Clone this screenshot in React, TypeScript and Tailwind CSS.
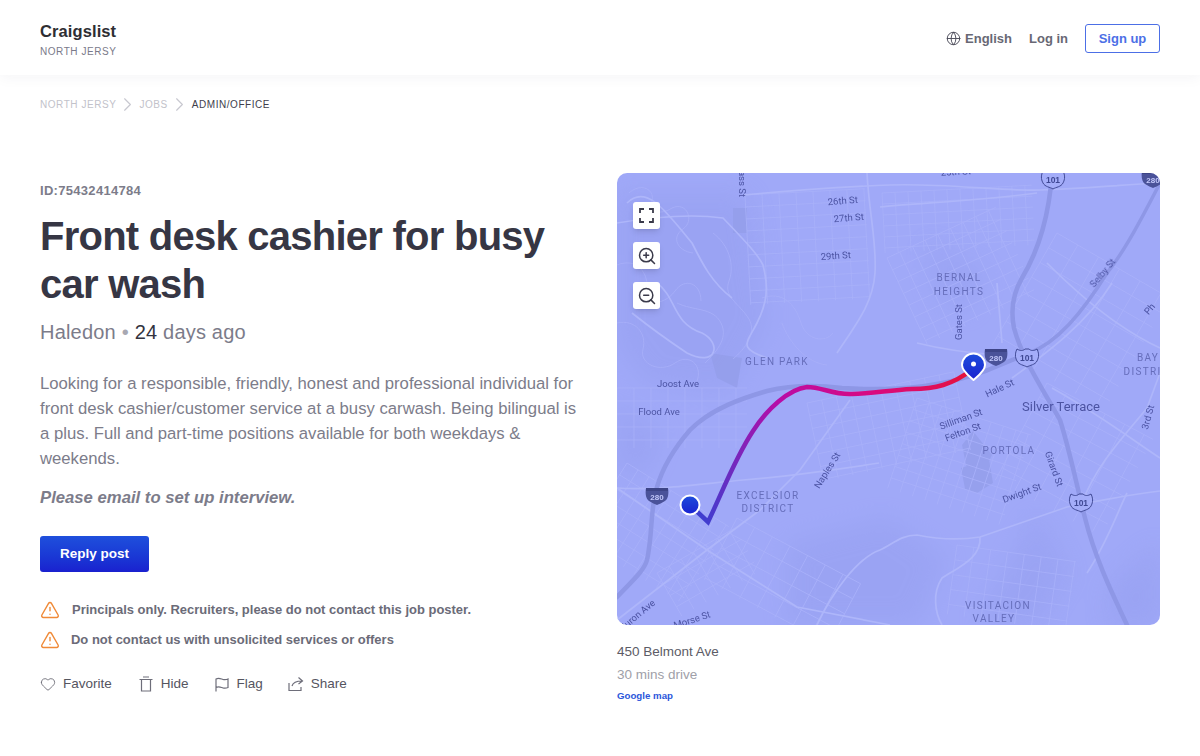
import React from 'react';
import { ChevronRight, Globe, Heart, TriangleAlert, ZoomIn, ZoomOut } from 'lucide-react';

const roads = [
  'M126 22 C170 18 220 14 273 12 S380 18 423 17 S500 12 543 10',
  'M250 0 C252 40 260 70 258 100 S240 150 220 180',
  'M0 50 C30 45 70 40 106 45 C125 65 140 80 146 92 C152 115 150 130 140 150 S120 175 150 185',
  'M263 34 C300 30 360 28 420 20',
  'M0 315 C40 318 90 310 126 307 S210 298 262 290',
  'M0 315 L90 377 L180 434 L273 452',
  'M0 447 L90 377 L143 337 L183 297 L233 227',
  'M200 452 C215 420 240 385 263 377 C275 372 283 362 300 362 C330 368 350 366 363 364 L450 334 C480 328 510 322 543 318',
  'M363 364 C365 385 340 395 325 405 C315 420 318 440 325 452',
  'M395 205 C430 180 470 150 495 110',
  'M430 90 C470 130 510 160 543 175',
  'M435 215 C480 240 520 270 543 285',
  'M465 330 C480 290 510 260 530 235 L543 200',
  'M470 400 C490 370 500 340 510 320',
  'M40 110 C60 125 55 150 85 160 C105 170 100 195 70 180 C55 170 40 160 15 140',
  'M10 30 C30 10 50 40 75 70 C85 90 95 110 115 125',
  'M300 170 C320 175 350 180 382 182',
  'M380 110 L385 170',
];

// thin winding streets on the hills
const hillRoads = [
  'M12 20 C25 8 40 18 34 30 C28 40 45 42 55 35 C70 28 78 48 66 56 C54 64 60 78 76 80',
  'M0 92 C20 84 32 100 30 118 C28 136 50 130 58 118 C68 104 84 110 84 128',
  'M0 150 C18 146 30 160 26 176 C22 192 44 200 58 190 C72 180 86 192 80 208',
  'M96 60 C112 72 118 92 112 108 C106 124 122 130 132 146 C140 160 128 176 116 186',
  'M60 130 C76 138 96 134 104 150 C112 166 98 180 88 190',
  'M145 125 C165 118 178 130 184 150 C190 168 208 170 216 160',
  'M165 150 C172 170 190 190 210 192',
];

type Block = { x: number; y: number; w: number; h: number; a: number; sx: number; sy: number };

// street grids: each block is a rotated patch of crossing lines
const blocks: Block[] = [
  { x: 128, y: 22, w: 120, h: 110, a: -3, sx: 17, sy: 12 },
  { x: 265, y: 20, w: 150, h: 60, a: -3, sx: 13, sy: 11 },
  { x: 270, y: 85, w: 120, h: 95, a: -25, sx: 14, sy: 13 },
  { x: 440, y: 60, w: 130, h: 130, a: 30, sx: 24, sy: 17 },
  { x: 430, y: 210, w: 120, h: 110, a: 28, sx: 22, sy: 16 },
  { x: 10, y: 290, w: 120, h: 90, a: 32, sx: 13, sy: 14 },
  { x: 0, y: 215, w: 130, h: 60, a: 0, sx: 17, sy: 13 },
  { x: 120, y: 345, w: 140, h: 70, a: 28, sx: 20, sy: 17 },
  { x: 190, y: 230, w: 150, h: 80, a: -12, sx: 15, sy: 13 },
  { x: 300, y: 225, w: 120, h: 95, a: 18, sx: 13, sy: 12 },
  { x: 340, y: 372, w: 120, h: 70, a: 8, sx: 17, sy: 15 },
  { x: 40, y: 400, w: 90, h: 50, a: -30, sx: 14, sy: 13 },
];

const softAreas = [
  'M0 20 L130 20 L150 150 L110 220 L30 210 L0 170 Z',
  'M60 100 C90 90 100 130 110 170 S80 190 70 150 Z',
  'M310 70 L370 100 L350 140 L320 125 Z',
  'M170 370 L270 345 L330 385 L300 452 L170 452 Z',
  'M495 410 L543 370 L543 452 L490 452 Z',
  'M0 230 L45 260 L30 300 L0 300 Z',
  'M420 340 L450 400 L420 452 L360 452 Z',
];

const parks = [
  'M345 272 L356 258 L375 282 L370 292 L355 300 L349 292 Z',
  'M344 295 L372 286 L376 310 L360 320 L348 316 Z',
  'M93 180 L125 185 L120 215 L100 205 Z',
  'M116 35 L130 35 L130 60 L116 60 Z',
];

function Shield101({ x, y }: { x: number; y: number }) {
  return (
    <g transform={`translate(${x} ${y})`}>
      <path d="M-10 -8 C-7 -6 -4 -6 -2 -8 L2 -8 C4 -6 7 -6 10 -8 C13 -2 11 2 10 4 C8 8 3 8 0 10 C-3 8 -8 8 -10 4 C-11 2 -13 -2 -10 -8 Z" fill="#a4adf9" stroke="#3f4894" strokeWidth="1" />
      <text x="0" y="3.500" textAnchor="middle" fontSize="8.500" fontWeight="700" fill="#3f4894" fontFamily="'Liberation Sans', sans-serif">101</text>
    </g>
  );
}

function Shield280({ x, y }: { x: number; y: number }) {
  return (
    <g transform={`translate(${x} ${y})`}>
      <path d="M-11 -8 L11 -8 C12 -2 11 3 8 5 C5 7 2 8 0 9 C-2 8 -5 7 -8 5 C-11 3 -12 -2 -11 -8 Z" fill="#4a5299" />
      <rect x="-11" y="-8" width="22" height="3" fill="#3d4487" />
      <text x="0" y="3.500" textAnchor="middle" fontSize="8" fontWeight="700" fill="#c3c8fb" fontFamily="'Liberation Sans', sans-serif">280</text>
    </g>
  );
}

function MapLabel({ x, y, r = 0, size = 9.5, spaced = false, children }: { x: number; y: number; r?: number; size?: number; spaced?: boolean; children: string }) {
  return (
    <text
      transform={`translate(${x} ${y}) rotate(${r})`}
      textAnchor="middle"
      fontSize={spaced ? size + 0.5 : size}
      letterSpacing={spaced ? 1.3 : 0}
      fill={spaced ? '#636bb8' : '#474f9e'}
      fontFamily="Roboto, sans-serif"
    >
      {children}
    </text>
  );
}

function MapArt() {
  return (
    <svg viewBox="0 0 543 452" className="block w-full h-full">
      <defs>
        <linearGradient id="route" gradientUnits="userSpaceOnUse" x1="85" y1="350" x2="350" y2="200">
          <stop offset="0" stopColor="#3d3fd0" />
          <stop offset="0.42" stopColor="#b80ca6" />
          <stop offset="0.7" stopColor="#d90a80" />
          <stop offset="1" stopColor="#e5123c" />
        </linearGradient>
        <linearGradient id="pin" x1="0" y1="0" x2="0" y2="1">
          <stop offset="0" stopColor="#1e4ddb" />
          <stop offset="1" stopColor="#1a22d0" />
        </linearGradient>
        <filter id="soft"><feGaussianBlur stdDeviation="0.4" /></filter>
        <filter id="softer"><feGaussianBlur stdDeviation="12" /></filter>
      </defs>
      <rect width="543" height="452" fill="#a0a9f8" />
      <g filter="url(#softer)" fill="#8f99ea" opacity="0.32">
        {softAreas.map((d, i) => (
          <path key={i} d={d} />
        ))}
      </g>
      <g filter="url(#soft)" fill="#939de9" opacity="0.7">
        {parks.map((d, i) => (
          <path key={i} d={d} />
        ))}
      </g>
      <g filter="url(#soft)" fill="none">
        <g stroke="#a8b0f9" strokeWidth="0.8">
          {blocks.map((b, i) => (
            <g key={i} transform={`translate(${b.x} ${b.y}) rotate(${b.a})`}>
              {Array.from({ length: Math.floor(b.w / b.sx) + 1 }).map((_, j) => (
                <line key={`v${j}`} x1={j * b.sx} y1={0} x2={j * b.sx} y2={b.h} />
              ))}
              {Array.from({ length: Math.floor(b.h / b.sy) + 1 }).map((_, j) => (
                <line key={`h${j}`} x1={0} y1={j * b.sy} x2={b.w} y2={j * b.sy} />
              ))}
            </g>
          ))}
          {hillRoads.map((d, i) => (
            <path key={i} d={d} />
          ))}
        </g>
        <g stroke="#aeb6fa" strokeWidth="1.7">
          {roads.map((d, i) => (
            <path key={i} d={d} />
          ))}
        </g>
        {/* freeways */}
        <g stroke="#8e97e6" strokeWidth="4.5" strokeLinecap="round">
          <path d="M0 424 C15 408 27 398 30 387 C36 360 33 335 40 314 C47 290 60 272 73 257 C95 235 126 225 150 218 C175 212 200 212 225 215 C270 218 330 216 383 192 L412 180" />
          <path d="M435 0 C432 45 420 80 405 105 C395 122 394 140 397 155 C405 185 425 215 443 247 C452 275 458 305 468 345 C478 385 495 420 510 452" />
          <path d="M412 180 C440 170 465 140 490 100 C510 75 530 35 543 10" strokeWidth="3.500" />
        </g>
      </g>
      <g filter="url(#soft)" opacity="0.95">
        <MapLabel x={122} y={8} r={90}>Bass St</MapLabel>
        <MapLabel x={226} y={31} r={-5}>26th St</MapLabel>
        <MapLabel x={232} y={48} r={-5}>27th St</MapLabel>
        <MapLabel x={219} y={86} r={-4}>29th St</MapLabel>
        <MapLabel x={339} y={2} r={-3}>25th St</MapLabel>
        <MapLabel x={160} y={192} spaced>GLEN PARK</MapLabel>
        <MapLabel x={61} y={214}>Joost Ave</MapLabel>
        <MapLabel x={42} y={242}>Flood Ave</MapLabel>
        <MapLabel x={342} y={108} spaced>BERNAL</MapLabel>
        <MapLabel x={342} y={122} spaced>HEIGHTS</MapLabel>
        <MapLabel x={345} y={149} r={-90}>Gates St</MapLabel>
        <MapLabel x={488} y={102} r={-50}>Selby St</MapLabel>
        <MapLabel x={384} y={218} r={-25}>Hale St</MapLabel>
        <MapLabel x={444} y={238} size={13}>Silver Terrace</MapLabel>
        <MapLabel x={345} y={249} r={-20}>Silliman St</MapLabel>
        <MapLabel x={347} y={262} r={-20}>Felton St</MapLabel>
        <MapLabel x={392} y={281} spaced>PORTOLA</MapLabel>
        <MapLabel x={434} y={297} r={70}>Girard St</MapLabel>
        <MapLabel x={406} y={323} r={-20}>Dwight St</MapLabel>
        <MapLabel x={534} y={245} r={-75}>3rd St</MapLabel>
        <MapLabel x={531} y={188} spaced>BAY</MapLabel>
        <MapLabel x={533} y={202} spaced>DISTRICT</MapLabel>
        <MapLabel x={151} y={326} spaced>EXCELSIOR</MapLabel>
        <MapLabel x={151} y={339} spaced>DISTRICT</MapLabel>
        <MapLabel x={213} y={299} r={-58}>Naples St</MapLabel>
        <MapLabel x={22} y={445} r={-40}>Huron Ave</MapLabel>
        <MapLabel x={76} y={450} r={-18}>Morse St</MapLabel>
        <MapLabel x={381} y={436} spaced>VISITACION</MapLabel>
        <MapLabel x={377} y={449} spaced>VALLEY</MapLabel>
        <MapLabel x={535} y={138} r={-50}>Ph</MapLabel>
      </g>
      <Shield280 x={40} y={323} />
      <Shield280 x={379} y={184} />
      <Shield280 x={536} y={6} />
      <Shield101 x={436} y={6} />
      <Shield101 x={410} y={184} />
      <Shield101 x={464} y={329} />
      <path
        d="M73 332 L91 349 C105 320 118 285 136 258 C150 236 172 216 190 214 C205 214 216 222 235 221 C255 221 272 217 295 216 C318 216 335 212 356 196"
        fill="none"
        stroke="url(#route)"
        strokeWidth="4.500"
        strokeLinejoin="miter"
      />
      <circle cx="73" cy="332" r="9.500" fill="url(#pin)" stroke="#fff" strokeWidth="2" />
      <path
        d="M356.500 207 C352 203 345 198 345 192 A11.500 11.500 0 0 1 368 192 C368 198 361 203 356.500 207 Z"
        fill="url(#pin)"
        stroke="#fff"
        strokeWidth="2"
        strokeLinejoin="round"
      />
      <circle cx="356.500" cy="191" r="2.500" fill="#fff" />
    </svg>
  );
}

function MapButton({ children }: { children: React.ReactNode }) {
  return <div className="w-[27px] h-[27px] bg-white rounded-[3px] shadow-md flex items-center justify-center text-[#3a3a4a]">{children}</div>;
}

export default function App() {
  return (
    <div className="min-h-[756px] bg-white text-[#33333f]" style={{ fontFamily: "'Liberation Sans', Arial, sans-serif" }}>
      <header className="h-[75px] px-10 flex items-center justify-between shadow-[0_2px_14px_rgba(40,40,80,0.05)]">
        <div className="pt-[3px]">
          <div className="text-[16.5px] leading-5 font-bold text-[#2e2e33] tracking-[0.1px]">Craigslist</div>
          <div className="text-[10px] leading-3 mt-[5px] tracking-[0.55px] text-[#7a7a8a]">NORTH JERSY</div>
        </div>
        <div className="flex items-center pt-[2px] text-[13px] font-bold text-[#686874]">
          <Globe size={15} strokeWidth={1.5} className="mr-[4px] text-[#4a4a58]" />
          <span>English</span>
          <span className="ml-[17px]">Log in</span>
          <span className="ml-[17px] w-[75px] h-[29px] flex items-center justify-center border border-[#4c6fe6] rounded-[3px] text-[#4c6fe6]">Sign up</span>
        </div>
      </header>

      <nav className="px-10 h-[58px] flex items-center pt-[1px] text-[10px] tracking-[0.55px] text-[#c2c2ca]">
        <span>NORTH JERSY</span>
        <ChevronRight size={23} strokeWidth={1.2} className="text-[#c8c8d0]" />
        <span>JOBS</span>
        <ChevronRight size={23} strokeWidth={1.2} className="text-[#c8c8d0]" />
        <span className="ml-[1px] text-[#3e3e4c]">ADMIN/OFFICE</span>
      </nav>

      <main className="pl-10 pr-10 pt-[40px] flex items-start">
        <section className="w-[577px] pr-[40px] shrink-0">
          <div className="text-[13px] leading-4 mt-[10px] font-bold tracking-[0.3px] text-[#7c7c8a]">ID:75432414784</div>
          <h1 className="mt-[13px] text-[40px] leading-[48px] font-bold tracking-[-0.75px] text-[#363644]">Front desk cashier for busy car wash</h1>
          <p className="mt-[10px] text-[20px] leading-7 tracking-[0.2px] text-[#7c7c8a]">
            Haledon <span className="text-[#a8a8b2]">•</span> <span className="text-[#33333f]">24</span> days ago
          </p>
          <p className="mt-[25px] text-[16.7px] leading-[25px] text-[#7c7c8a]">
            Looking for a responsible, friendly, honest and professional individual for front desk cashier/customer service at a busy carwash. Being bilingual is a plus. Full and part-time positions available for both weekdays &amp; weekends.
          </p>
          <p className="mt-[14px] text-[16.7px] leading-[25px] font-bold italic text-[#7c7c8a]">Please email to set up interview.</p>
          <button className="mt-[26px] w-[109px] h-9 rounded-[3px] bg-gradient-to-b from-[#1f4fdc] to-[#1a20cf] text-white text-[13.5px] font-bold block">Reply post</button>
          <div className="mt-[23px] flex items-center h-[30px] text-[12.97px] font-bold text-[#6b6b78]">
            <TriangleAlert size={20} strokeWidth={1.7} className="text-[#f08a38]" />
            <span className="ml-[12px]">Principals only. Recruiters, please do not contact this job poster.</span>
          </div>
          <div className="flex items-center h-[30px] text-[12.97px] font-bold text-[#6b6b78]">
            <TriangleAlert size={20} strokeWidth={1.7} className="text-[#f08a38]" />
            <span className="ml-[11px]">Do not contact us with unsolicited services or offers</span>
          </div>
          <div className="mt-[19px] flex items-center text-[13.5px] text-[#55555f]">
            <Heart size={16} strokeWidth={1.2} className="text-[#5a5a66]" />
            <span className="ml-[7px]">Favorite</span>
            <svg width="16" height="16" viewBox="0 0 16 16" fill="none" stroke="#6e6e7a" strokeWidth="1.2" className="ml-[26px]">
              <path d="M1.500 3.500h13M5 1h6M3.500 3.500V15h9V3.500" />
            </svg>
            <span className="ml-[7px]">Hide</span>
            <svg width="16" height="16" viewBox="0 0 16 16" fill="none" stroke="#6e6e7a" strokeWidth="1.2" className="ml-[25px]">
              <path d="M2 15.500V3c3-1.500 5 0 7 .5 2 .4 3.500.2 5-.5v8.500c-1.500.6-3 .8-5 .4-2-.5-4-2-7-.4" />
            </svg>
            <span className="ml-[7px]">Flag</span>
            <svg width="16" height="16" viewBox="0 0 16 16" fill="none" stroke="#6e6e7a" strokeWidth="1.2" className="ml-[25px]">
              <path d="M1 7v7.500h12V11M4 10c1-3.500 4-5 10-5M10.500 1.500 14.500 5l-4 3" />
            </svg>
            <span className="ml-[7px]">Share</span>
          </div>
        </section>

        <section className="w-[543px] shrink-0">
          <div className="relative h-[452px] rounded-[10px] overflow-hidden">
            <MapArt />
            <div className="absolute left-[16px] top-[29px] flex flex-col gap-[13px]">
              <MapButton>
                <svg width="15" height="15" viewBox="0 0 15 15" fill="none" stroke="currentColor" strokeWidth="1.8">
                  <path d="M1 5V1h4M10 1h4v4M14 10v4h-4M5 14H1v-4" />
                </svg>
              </MapButton>
              <MapButton>
                <ZoomIn size={20} strokeWidth={1.8} />
              </MapButton>
              <MapButton>
                <ZoomOut size={20} strokeWidth={1.8} />
              </MapButton>
            </div>
          </div>
          <div className="mt-[18px] text-[13.5px] leading-[18px] text-[#5c5c66]">450 Belmont Ave</div>
          <div className="mt-[5px] text-[13.5px] leading-[18px] text-[#a0a0a8]">30 mins drive</div>
          <div className="mt-[5px] text-[9.7px] leading-[14px] font-bold text-[#2b57db]">Google map</div>
        </section>
      </main>
    </div>
  );
}
